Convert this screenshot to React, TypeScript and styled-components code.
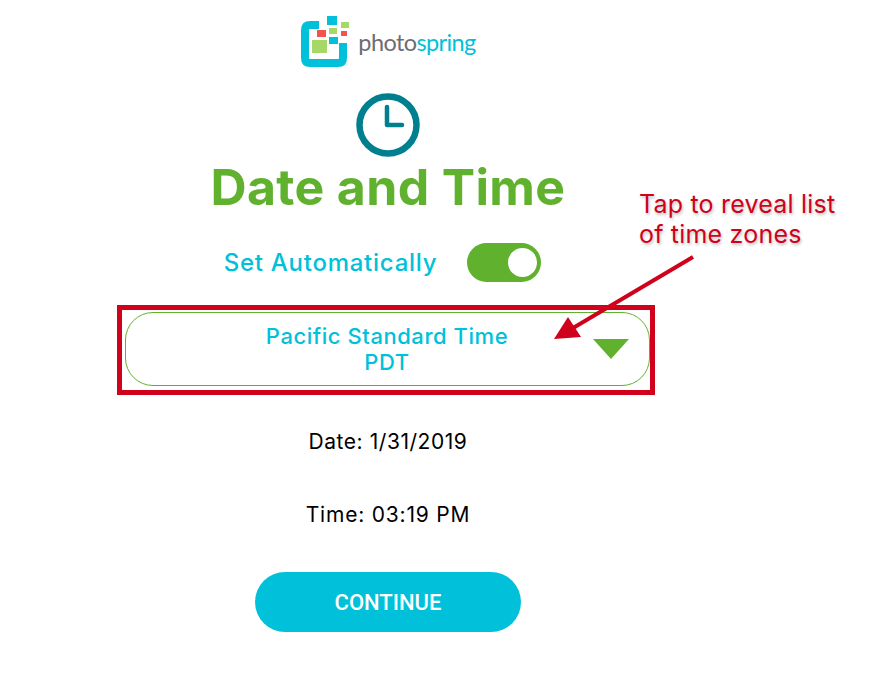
import { FunctionComponent } from "react";
import styled, { createGlobalStyle } from "styled-components";

const colors = {
  green: "#5fb12e",
  cyan: "#00c1d9",
  teal: "#007f8f",
  red: "#d0021b",
  gray: "#6d6e71",
};

const GlobalStyle = createGlobalStyle`
  html, body {
    margin: 0;
    padding: 0;
    background: #fff;
  }
  body {
    font-family: "Inter", "Open Sans", sans-serif;
  }
`;

const Page = styled.div`
  position: relative;
  width: 886px;
  height: 691px;
  overflow: hidden;
`;

const Column = styled.main`
  width: 776px;
  padding-top: 15px;
  display: flex;
  flex-direction: column;
  align-items: center;
`;

const Brand = styled.div`
  display: flex;
  align-items: center;
  gap: 8px;
  height: 52px;
`;

const Wordmark = styled.span`
  font-family: "Lato", sans-serif;
  font-size: 23.5px;
  line-height: 26px;
  letter-spacing: -0.6px;
  color: ${colors.gray};
  margin-top: 2px;
  span {
    color: ${colors.cyan};
  }
`;

const ClockIcon = styled.svg`
  display: block;
  margin-top: 26px;
`;

const Title = styled.h1`
  margin: 1px 0 0;
  font-size: 50px;
  line-height: 58px;
  font-weight: 700;
  letter-spacing: 0.35px;
  color: ${colors.green};
`;

const AutoRow = styled.div`
  display: flex;
  align-items: center;
  gap: 30px;
  margin-top: 27px;
  margin-right: 11px;
  height: 39px;
`;

const AutoLabel = styled.span`
  font-size: 24px;
  font-weight: 500;
  letter-spacing: 0.75px;
  color: ${colors.cyan};
`;

const Toggle = styled.div`
  width: 74px;
  height: 39px;
  box-sizing: border-box;
  padding: 5px 4px;
  border-radius: 20px;
  background: ${colors.green};
  display: flex;
  justify-content: flex-end;
`;

const Knob = styled.div`
  width: 29px;
  height: 29px;
  border-radius: 50%;
  background: #fff;
`;

const Select = styled.div`
  position: relative;
  width: 525px;
  height: 74px;
  box-sizing: border-box;
  margin: 30px 2px 0 0;
  border: 1px solid ${colors.green};
  border-radius: 28px;
  display: flex;
  flex-direction: column;
  align-items: center;
  justify-content: center;
  font-size: 22px;
  line-height: 26px;
  font-weight: 500;
  letter-spacing: 0.55px;
  color: ${colors.cyan};
`;

const Caret = styled.div`
  position: absolute;
  right: 20px;
  top: 26px;
  width: 0;
  height: 0;
  border-left: 18px solid transparent;
  border-right: 18px solid transparent;
  border-top: 20px solid ${colors.green};
`;

const InfoLine = styled.p<{ $top: number; $spacing: number }>`
  margin: ${({ $top }) => $top}px 0 0;
  font-size: 21px;
  line-height: 26px;
  font-weight: 400;
  letter-spacing: ${({ $spacing }) => $spacing}px;
  color: #000;
`;

const ContinueButton = styled.button`
  width: 266px;
  height: 60px;
  margin-top: 44px;
  border: 0;
  border-radius: 30px;
  background: ${colors.cyan};
  color: #fff;
  font-family: "Roboto", sans-serif;
  font-size: 22px;
  font-weight: 500;
`;

// annotation layer, sits over the screenshot
const HighlightBox = styled.div`
  position: absolute;
  left: 117px;
  top: 305px;
  width: 538px;
  height: 90px;
  box-sizing: border-box;
  border: 5px solid ${colors.red};
`;

const Callout = styled.div`
  position: absolute;
  left: 639px;
  top: 189px;
  font-size: 25px;
  line-height: 30px;
  letter-spacing: 0.2px;
  color: ${colors.red};
  text-shadow: 1px 2px 3px rgba(0, 0, 0, 0.25);
  white-space: nowrap;
`;

const ArrowOverlay = styled.svg`
  position: absolute;
  left: 540px;
  top: 240px;
`;

const Logo: FunctionComponent = () => (
  <svg width="50" height="52" viewBox="300 15 50 52">
    <path
      d="M319 25H310Q305 25 305 30V58Q305 63 310 63H338Q343 63 343 58V43"
      fill="none"
      stroke={colors.cyan}
      strokeWidth="8"
    />
    <rect x="327" y="16" width="10" height="9" fill={colors.cyan} />
    <rect x="341" y="22" width="8" height="6" fill="#a5d867" />
    <rect x="317" y="30" width="9" height="7" fill="#f4524d" />
    <rect x="329" y="28" width="8" height="6" fill="#a5d867" />
    <rect x="341" y="31" width="6" height="5" fill="#f4524d" />
    <rect x="329" y="37" width="9" height="7" fill={colors.cyan} />
    <rect x="312" y="40" width="15" height="13" fill="#a5d867" />
  </svg>
);

const App: FunctionComponent = () => (
  <Page>
    <GlobalStyle />
    <Column>
      <Brand>
        <Logo />
        <Wordmark>
          photo<span>spring</span>
        </Wordmark>
      </Brand>
      <ClockIcon width="64" height="64" viewBox="0 0 64 64">
        <circle cx="32" cy="32" r="28.5" fill="none" stroke={colors.teal} strokeWidth="6.5" />
        <path d="M31 14V32H46" fill="none" stroke={colors.teal} strokeWidth="4.5" strokeLinecap="round" strokeLinejoin="round" />
      </ClockIcon>
      <Title>Date and Time</Title>
      <AutoRow>
        <AutoLabel>Set Automatically</AutoLabel>
        <Toggle>
          <Knob />
        </Toggle>
      </AutoRow>
      <Select>
        <span>Pacific Standard Time</span>
        <span>PDT</span>
        <Caret />
      </Select>
      <InfoLine $top={43} $spacing={0.55}>Date: 1/31/2019</InfoLine>
      <InfoLine $top={47} $spacing={0.8}>Time: 03:19 PM</InfoLine>
      <ContinueButton>CONTINUE</ContinueButton>
    </Column>
    <HighlightBox />
    <Callout>
      Tap to reveal list
      <br />
      of time zones
    </Callout>
    <ArrowOverlay width="160" height="110" viewBox="540 240 160 110">
      <path d="M693 257L573 328" stroke={colors.red} strokeWidth="4" fill="none" />
      <polygon points="554,339 568,317 581,337" fill={colors.red} />
    </ArrowOverlay>
  </Page>
);

export default App;
